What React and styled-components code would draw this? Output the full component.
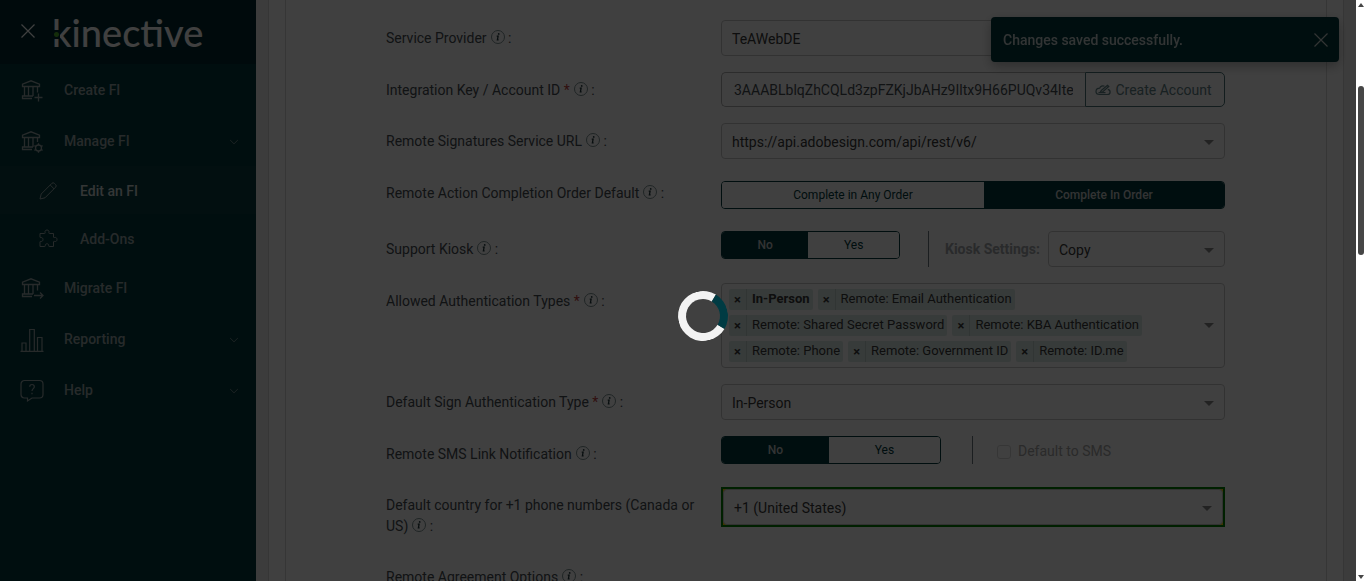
import styled, { createGlobalStyle, css } from "styled-components";
import { BsChevronDown } from "react-icons/bs";

const c = {
  teal: "#00383c",
  tealDark: "#002b31",
  text: "#464c52",
  textSelect: "#383838",
  line: "#c8c8c8",
};

const rutas = [
  { nombre: "Create FI", icono: <IconBank extra="plus" /> },
  { nombre: "Manage FI", icono: <IconBank extra="gear" />, flecha: true },
  { nombre: "Edit an FI", icono: <IconPencil />, sub: true, activo: true },
  { nombre: "Add-Ons", icono: <IconPuzzle />, sub: true },
  { nombre: "Migrate FI", icono: <IconBank extra="arrow" /> },
  { nombre: "Reporting", icono: <IconBars />, flecha: true },
  { nombre: "Help", icono: <IconHelp />, flecha: true },
];

const authTypes = [
  { nombre: "In-Person", bold: true },
  { nombre: "Remote: Email Authentication" },
  { nombre: "Remote: Shared Secret Password" },
  { nombre: "Remote: KBA Authentication" },
  { nombre: "Remote: Phone" },
  { nombre: "Remote: Government ID" },
  { nombre: "Remote: ID.me" },
];

export default function App() {
  return (
    <>
      <GlobalStyle />
      <Shell>
        <Sidebar />
        <Main>
          <Card>
            <InnerCard>
              <SignatureForm />
            </InnerCard>
          </Card>
        </Main>
        <Scrollbar aria-hidden="true">
          <Arrow />
          <Track $grow={79} />
          <Thumb />
          <Track $grow={320} />
          <Arrow $down />
        </Scrollbar>
      </Shell>
      <Toast role="status">
        <span>Changes saved successfully.</span>
        <IconButton aria-label="Dismiss">
          <IconClose size={16} />
        </IconButton>
      </Toast>
      <Overlay>
        <Spinner />
      </Overlay>
    </>
  );
}

function Sidebar() {
  return (
    <Aside>
      <Brand>
        <IconButton aria-label="Close menu">
          <IconClose size={16} />
        </IconButton>
        <Logo>kinective</Logo>
      </Brand>
      <nav>
        {rutas.map((item) => (
          <NavLink href="#" key={item.nombre} $sub={item.sub} $activo={item.activo}>
            <span className="icono">{item.icono}</span>
            <span className="nombre">{item.nombre}</span>
            {item.flecha && <BsChevronDown size={10} />}
          </NavLink>
        ))}
      </nav>
    </Aside>
  );
}

function SignatureForm() {
  return (
    <Form>
      <Field label="Service Provider" id="provider">
        <Dropdown id="provider" value="TeAWebDE" />
      </Field>
      <Field label="Integration Key / Account ID" id="key" required>
        <InputGroup>
          <Input
            id="key"
            type="text"
            defaultValue="3AAABLblqZhCQLd3zpFZKjJbAHz9Iltx9H66PUQv34ItexK"
          />
          <OutlineButton type="button">
            <IconCloudPen />
            Create Account
          </OutlineButton>
        </InputGroup>
      </Field>
      <Field label="Remote Signatures Service URL" id="url">
        <Dropdown id="url" value="https://api.adobesign.com/api/rest/v6/" />
      </Field>
      <Field label="Remote Action Completion Order Default" id="order">
        <Centered>
          <Toggle id="order" options={["Complete in Any Order", "Complete In Order"]} active={1} />
        </Centered>
      </Field>
      <Field label="Support Kiosk" id="kiosk">
        <Inline>
          <Toggle id="kiosk" options={["No", "Yes"]} active={0} width="179px" />
          <Divider $before="28px" $after="16px" />
          <KioskLabel htmlFor="kioskSettings">Kiosk Settings:</KioskLabel>
          <Dropdown id="kioskSettings" value="Copy" />
        </Inline>
      </Field>
      <Field label="Allowed Authentication Types" id="auth" required>
        <MultiSelect id="auth">
          <ul>
            {authTypes.map((item) => (
              <Chip key={item.nombre} $bold={item.bold}>
                <button type="button" aria-label={`Remove ${item.nombre}`}>
                  ×
                </button>
                <span>{item.nombre}</span>
              </Chip>
            ))}
          </ul>
        </MultiSelect>
      </Field>
      <Field label="Default Sign Authentication Type" id="sign" required>
        <Dropdown id="sign" value="In-Person" />
      </Field>
      <Field label="Remote SMS Link Notification" id="sms">
        <Inline>
          <Toggle id="sms" options={["No", "Yes"]} active={0} width="220px" />
          <Divider $before="31px" $after="24px" $short />
          <CheckLabel>
            <input type="checkbox" disabled />
            Default to SMS
          </CheckLabel>
        </Inline>
      </Field>
      <Field label="Default country for +1 phone numbers (Canada or US)" id="country">
        <Highlight>
          <Dropdown id="country" value="+1 (United States)" />
        </Highlight>
      </Field>
      <Field label="Remote Agreement Options" id="agreement" />
    </Form>
  );
}

function Field({ label, id, required, children }) {
  return (
    <Row>
      <Label htmlFor={id}>
        {label}
        {required && <em> *</em>}
        <IconInfo /> :
      </Label>
      <div>{children}</div>
    </Row>
  );
}

function Dropdown({ id, value }) {
  return (
    <SelectWrap>
      <select id={id} defaultValue={value}>
        <option>{value}</option>
      </select>
    </SelectWrap>
  );
}

function Toggle({ id, options, active, width }) {
  return (
    <ToggleGroup id={id} role="group" $width={width}>
      {options.map((text, i) => (
        <ToggleButton type="button" key={text} $active={i === active}>
          {text}
        </ToggleButton>
      ))}
    </ToggleGroup>
  );
}

function IconInfo() {
  return (
    <svg width="14" height="14" viewBox="0 0 14 14" fill="none">
      <circle cx="7" cy="7" r="6.500" stroke="#7d9092" />
      <circle cx="7.700" cy="3.900" r="0.900" fill="#22383c" />
      <path d="M5.700 6.200h1.400L6.400 9.800h1.200" stroke="#22383c" strokeWidth="1.300" />
    </svg>
  );
}

function IconClose({ size }) {
  return (
    <svg width={size} height={size} viewBox="0 0 16 16" fill="none" stroke="currentColor" strokeWidth="1.200">
      <path d="M1.500 1.500l13 13M14.500 1.500l-13 13" />
    </svg>
  );
}

function IconBank({ extra }) {
  return (
    <svg width="24" height="24" viewBox="0 0 24 24" fill="none" stroke="currentColor" strokeWidth="1.300">
      <path d="M2.500 7.500V5.200L11 1.800l8.500 3.400v2.300zM4.500 7.500v9.500M8.500 7.500v9.500M13 7.500v9.500" />
      {extra === "gear" ? <path d="M17.500 7.500v4.500" /> : <path d="M17.500 7.500v6" />}
      <path d="M13 17H2.500v2.500H12" />
      {extra === "plus" && <path d="M18.500 14.500v8M14.500 18.500h8" />}
      {extra === "arrow" && <path d="M14 18.500h9M20 15.500l3 3-3 3" />}
      {extra === "gear" && (
        <>
          <circle cx="18.500" cy="18" r="3" />
          <path d="M18.500 13.300V15M18.500 21v1.700M14.400 15.600l1.500.9M21.100 19.500l1.500.9M14.400 20.400l1.500-.9M21.100 16.500l1.500-.9" />
        </>
      )}
    </svg>
  );
}

function IconPencil() {
  return (
    <svg width="20" height="20" viewBox="0 0 20 20" fill="none" stroke="currentColor">
      <path d="M2 18l1.200-5L13.800 2.400a1.800 1.800 0 0 1 2.600 0l1.200 1.200a1.800 1.800 0 0 1 0 2.600L7 16.800zM12.200 4l3.800 3.800" />
    </svg>
  );
}

function IconPuzzle() {
  return (
    <svg width="20" height="20" viewBox="0 0 20 20" fill="none" stroke="currentColor">
      <path d="M2 4.500h4.600c.6 0 .7-.5.5-1C6.600 2.200 7.500 1 9 1s2.400 1.200 1.900 2.500c-.2.500-.1 1 .5 1H15.500V8c0 .6.400.8 1 .500 1.300-.5 2.500.4 2.500 2s-1.200 2.400-2.500 1.900c-.6-.2-1 0-1 .6v4.500H11.200c-.5 0-.6-.5-.5-1 .2-1-.5-1.700-1.700-1.700s-1.900.7-1.700 1.700c.1.500 0 1-.5 1H2V13c0-.6.400-.7 1-.6 1.200.2 2-.6 2-1.900S4.200 8.400 3 8.600c-.6.1-1 0-1-.6z" />
    </svg>
  );
}

function IconBars() {
  return (
    <svg width="24" height="24" viewBox="0 0 24 24" fill="none" stroke="currentColor" strokeWidth="1.200">
      <path d="M.5 23.400h23M2 23v-8h4v8M9.700 23V1.500h4.600V23M17.500 23V9.500H22V23" />
    </svg>
  );
}

function IconHelp() {
  return (
    <svg width="24" height="24" viewBox="0 0 24 24" fill="none" stroke="currentColor" strokeWidth="1.200">
      <path d="M4.500 1.500h15a3.500 3.500 0 0 1 3.500 3.500v10.500a3.500 3.500 0 0 1-3.500 3.500h-7.500L7.500 22v-3h-3A3.500 3.500 0 0 1 1 15.500V5a3.500 3.500 0 0 1 3.500-3.500z" />
      <path d="M9.700 7.800C9.700 6.300 10.600 5.500 12 5.500s2.300.9 2.300 2.200c0 1.900-2.300 2-2.300 4.300M12 13.800v1.500" />
    </svg>
  );
}

function IconCloudPen() {
  return (
    <svg width="16" height="16" viewBox="0 0 16 16" fill="none" stroke="currentColor" strokeWidth="1.200">
      <path d="M9.500 4.200C7.600 3.200 5.200 4.200 4.700 6.200 2.500 6.300 1 7.700 1 9.500 1 11.300 2.500 12.500 4.500 12.500h7.700c1.700 0 2.900-1.100 2.900-2.600 0-1.400-.9-2.300-2.300-2.600" />
      <path d="M5 10.500l1.300-2L12.500 3.200l1.300 1.300-6 5.300zM3.500 10.700h7" />
    </svg>
  );
}

const GlobalStyle = createGlobalStyle`
  * {
    box-sizing: border-box;
  }
  body {
    margin: 0;
    overflow: hidden;
    background: #ffffff;
    color: ${c.text};
    font-family: Roboto, "Liberation Sans", sans-serif;
    font-size: 14px;
    line-height: 21px;
  }
  button, input, select {
    font: inherit;
    color: inherit;
  }
`;

const Shell = styled.div`
  display: flex;
  height: 100vh;
  overflow: hidden;
`;

const Aside = styled.aside`
  flex: 0 0 256px;
  background: ${c.teal};
`;

const Brand = styled.header`
  display: flex;
  align-items: center;
  gap: 16px;
  height: 64px;
  padding: 0 20px 2px;
  background: ${c.tealDark};
  color: #ffffff;
`;

const IconButton = styled.button`
  display: flex;
  padding: 0;
  border: 0;
  background: none;
`;

const Logo = styled.span`
  position: relative;
  padding-top: 2px;
  font-family: Lato, sans-serif;
  font-size: 38px;
  font-weight: 500;
  line-height: 64px;
  /* green dot that splits the stem of the k */
  &::before {
    content: "";
    position: absolute;
    left: 1px;
    top: 32px;
    width: 7px;
    height: 7px;
    border: solid ${c.tealDark};
    border-width: 1px 0;
    background: radial-gradient(circle, #4fb52b 2px, ${c.tealDark} 3px);
  }
`;

const NavLink = styled.a`
  display: flex;
  align-items: center;
  height: 51px;
  padding: 2px 17px 0 20px;
  color: #9aa8a9;
  font-weight: 500;
  text-decoration: none;
  .icono {
    display: flex;
    width: 44px;
  }
  .nombre {
    flex: 1;
  }
  ${({ $sub }) =>
    $sub &&
    css`
      height: 48px;
      padding-left: 38px;
      .icono {
        width: 42px;
      }
    `}
  ${({ $activo }) =>
    $activo &&
    css`
      background: #083e42;
      color: #d0d6d6;
      .icono {
        color: #9aa8a9;
      }
    `}
`;

const Main = styled.main`
  flex: 1;
  min-width: 0;
  padding: 0 12px;
  background: #f0f0f0;
`;

const Card = styled.div`
  height: 100%;
  padding: 0 16px;
  border: solid #d8d8d8;
  border-width: 0 1px;
  background: #ffffff;
`;

const InnerCard = styled.div`
  height: 100%;
  padding: 20px 101px 0 100px;
  border: solid #d8d8d8;
  border-width: 0 1px;
`;

const Form = styled.form`
  display: flex;
  flex-direction: column;
  gap: 16px;
`;

const Row = styled.div`
  display: grid;
  grid-template-columns: 335fr 504fr;
`;

const Label = styled.label`
  padding: 8px 16px 6px 0;
  em {
    color: #c04040;
    font-style: normal;
  }
  svg {
    margin-left: 4px;
    vertical-align: -1px;
  }
`;

const SelectWrap = styled.div`
  display: grid;
  align-items: center;
  flex: 1;
  select {
    grid-area: 1 / 1;
    width: 100%;
    height: 36px;
    padding: 2px 28px 0 10px;
    border: 1px solid ${c.line};
    border-radius: 4px;
    background: #ffffff;
    color: ${c.textSelect};
    appearance: none;
  }
  &::after {
    content: "";
    grid-area: 1 / 1;
    justify-self: end;
    margin: 2px 11px 0 0;
    border: 5px solid transparent;
    border-top-color: #888888;
    border-bottom: 0;
    pointer-events: none;
  }
`;

const Highlight = styled.div`
  border: 2px solid green;
  background: #ffd500;
`;

const InputGroup = styled.div`
  display: flex;
`;

const Input = styled.input`
  flex: 1;
  min-width: 0;
  height: 35px;
  padding: 1px 12px 0;
  border: 1px solid #b0b0b0;
  border-right: 0;
  border-radius: 5px 0 0 5px;
  background: #ffffff;
`;

const OutlineButton = styled.button`
  display: flex;
  align-items: center;
  justify-content: center;
  gap: 4px;
  width: 140px;
  height: 35px;
  padding: 1px 3px 0 0;
  border: 1px solid #4c7478;
  border-radius: 0 5px 5px 0;
  background: #ffffff;
  color: #5f8286;
`;

const Centered = styled.div`
  padding: 6px 0;
`;

const Inline = styled.div`
  display: flex;
  align-items: flex-start;
`;

const ToggleGroup = styled.div`
  display: flex;
  width: ${({ $width }) => $width || "100%"};
  height: 28px;
  border: 1px solid ${c.teal};
  border-radius: 4px;
  overflow: hidden;
`;

const ToggleButton = styled.button`
  flex: 1 1 auto;
  padding: 0;
  border: 0;
  background: ${({ $active }) => ($active ? c.teal : "#ffffff")};
  color: ${({ $active }) => ($active ? "#c8cccc" : c.teal)};
  font-size: 12px;
  font-weight: ${({ $active }) => ($active ? 500 : 400)};
`;

const Divider = styled.span`
  width: 1px;
  height: ${({ $short }) => ($short ? "28px" : "36px")};
  margin: 0 ${({ $after }) => $after} 0 ${({ $before }) => $before};
  background: #6c7a80;
`;

const KioskLabel = styled.label`
  padding: 8px 8px 0 0;
  color: #a4a8ac;
  font-weight: 700;
`;

const CheckLabel = styled.label`
  display: flex;
  align-items: center;
  gap: 7px;
  padding-top: 5px;
  color: #a8a8a8;
  input {
    width: 14px;
    height: 14px;
    margin: 0;
    border: 1px solid #d8d8d8;
    border-radius: 3px;
    appearance: none;
  }
`;

const MultiSelect = styled.div`
  display: flex;
  align-items: center;
  padding: 5px 10px 5px 7px;
  border: 1px solid ${c.line};
  border-radius: 4px;
  ul {
    display: flex;
    flex: 1;
    flex-wrap: wrap;
    gap: 5px;
    margin: 0;
    padding: 0 40px 0 0;
    list-style: none;
  }
  &::after {
    content: "";
    border: 5px solid transparent;
    border-top-color: #888888;
    border-bottom: 0;
  }
`;

const Chip = styled.li`
  display: flex;
  height: 21px;
  border-radius: 2px;
  background: #dcebe7;
  color: ${c.textSelect};
  font-size: 13px;
  font-weight: ${({ $bold }) => ($bold ? 700 : 400)};
  line-height: 20px;
  button {
    width: 18px;
    padding: 0;
    border: 0;
    border-right: 1px solid #c4d2ce;
    background: none;
    font-weight: 700;
    line-height: 20px;
  }
  span {
    padding: 0 3px 0 5px;
  }
`;

const Toast = styled.div`
  position: fixed;
  top: 17px;
  right: 27px;
  display: flex;
  align-items: center;
  justify-content: space-between;
  width: 348px;
  height: 45px;
  padding: 1px 10px 0 12px;
  border-radius: 4px;
  background: ${c.teal};
  box-shadow: 0 4px 12px rgba(0, 0, 0, 0.3);
  color: #c8d0d0;
  font-weight: 500;
`;

const Overlay = styled.div`
  position: fixed;
  inset: 0 10px 0 0;
  background: rgba(0, 0, 0, 0.75);
`;

const Spinner = styled.div`
  position: absolute;
  top: 50%;
  left: 50%;
  width: 50px;
  height: 50px;
  border: 8px solid #f3f3f3;
  border-right-color: #003b43;
  border-radius: 50%;
  transform: rotate(-14deg);
`;

const Scrollbar = styled.div`
  display: flex;
  flex: 0 0 10px;
  flex-direction: column;
  align-items: center;
  padding: 3px 0 2px;
  background: #ffffff;
`;

const Arrow = styled.span`
  border: 3px solid transparent;
  border-bottom: 4px solid #464646;
  border-top: 0;
  transform: ${({ $down }) => ($down ? "rotate(180deg)" : "none")};
`;

const Track = styled.span`
  flex: ${({ $grow }) => $grow};
`;

const Thumb = styled.span`
  flex: 169;
  width: 6px;
  border-radius: 3px;
  background: #464646;
`;
